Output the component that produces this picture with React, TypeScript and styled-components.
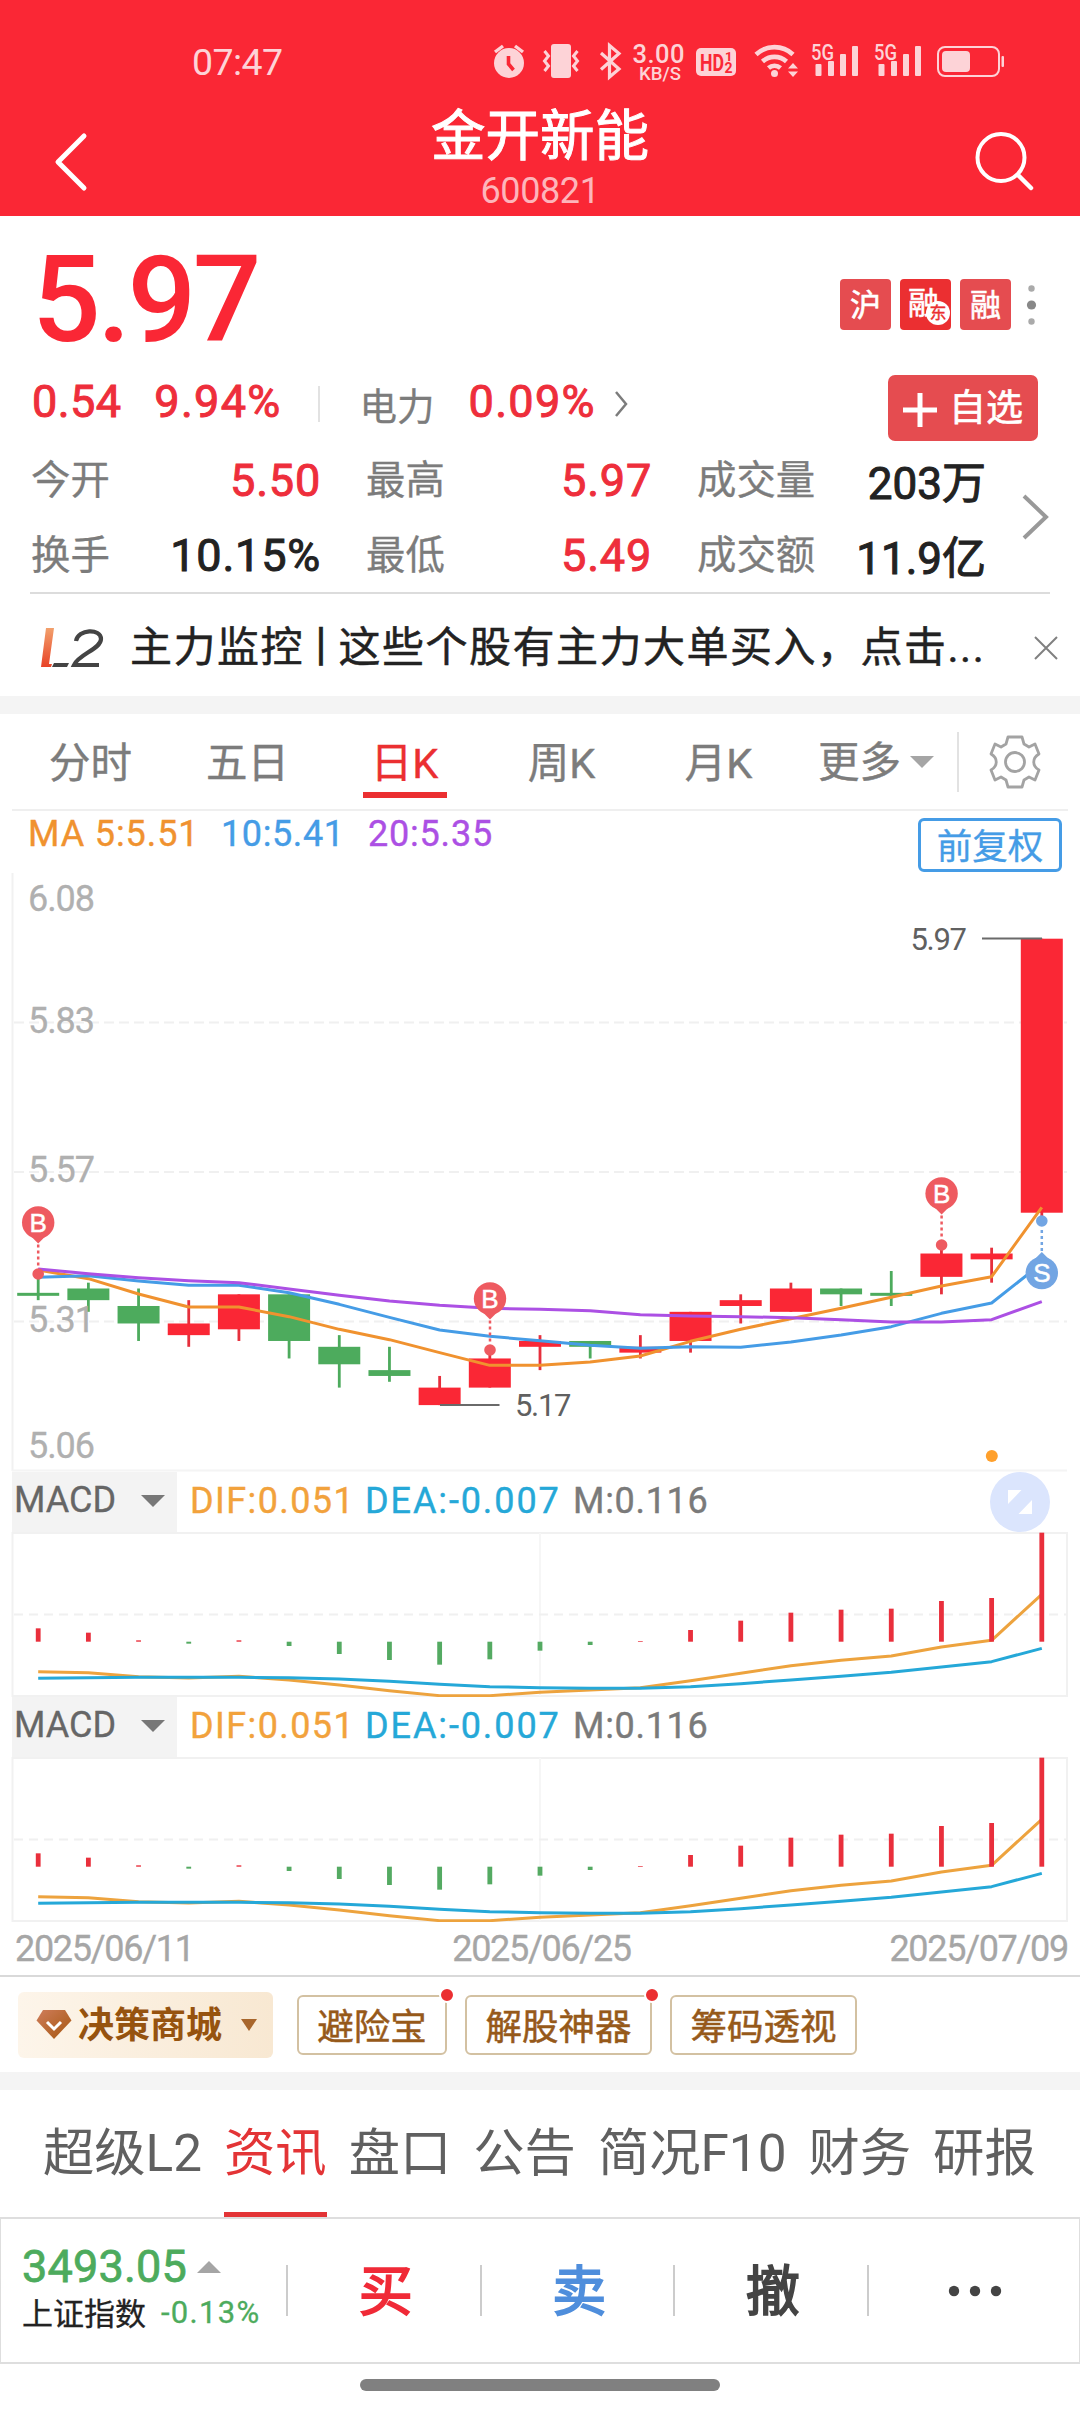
import React from 'react';
import styled, { createGlobalStyle } from 'styled-components';

const GlobalStyle = createGlobalStyle`
  * { box-sizing: border-box; }
  body { margin: 0; background: #fff; }
`;

const FONT = `Roboto, 'Noto Sans CJK SC', sans-serif`;
const RED = '#fa2735';
const VALUE_RED = '#ee2e3b';
const GREEN = '#4dab5d';
const ORANGE = '#f0922f';
const BLUE = '#459ce6';
const PURPLE = '#ac50e4';

const Screen = styled.div`
  width: 1080px;
  height: 2412px;
  display: flex;
  flex-direction: column;
  overflow: hidden;
  background: #fff;
  font-family: ${FONT};
  color: #222;
`;

const Text = styled.span<{ $size: number; $color?: string; $ls?: number; $weight?: number; $bold?: number }>`
  display: block;
  white-space: nowrap;
  line-height: 1.2;
  font-size: ${p => p.$size}px;
  color: ${p => p.$color ?? 'inherit'};
  letter-spacing: ${p => p.$ls ?? 0}px;
  font-weight: ${p => p.$weight ?? 400};
  -webkit-text-stroke: ${p => p.$bold ?? 0}px currentColor;
`;

/* ---------- header ---------- */

const Header = styled.header`
  height: 216px;
  flex: none;
  background: ${RED};
  color: #fff;
`;

const StatusBar = styled.div`
  height: 98px;
  padding: 26px 76px 0 192px;
  display: flex;
  justify-content: space-between;
  align-items: center;
  color: #fdd3d7;
`;

const TitleBar = styled.div`
  display: grid;
  grid-template-columns: 140px 1fr 140px;
  height: 118px;
`;

const TitleStack = styled.div`
  display: flex;
  flex-direction: column;
  align-items: center;
  gap: 1px;
  padding-top: 6px;
`;

const StatusIcons = () => (
  <svg width="512" height="54" viewBox="492 35 512 54" fill="#fdd3d7" fontFamily="Roboto, sans-serif">
    <circle cx="509" cy="63" r="15" />
    <path d="M495 52l8-6M523 52l-8-6" stroke="#fdd3d7" strokeWidth="3.4" />
    <path d="M508.500 56v8l5 6" stroke={RED} strokeWidth="3.600" fill="none" />
    <rect x="551" y="44" width="20" height="34" rx="3" />
    <path d="M544.500 51l4 5-4 5 4 5-4 5M577.500 51l-4 5 4 5-4 5 4 5" stroke="#fdd3d7" strokeWidth="3" fill="none" />
    <path d="M601 53l18 16-9.500 8V45.500l9.500 8-18 16" stroke="#fdd3d7" strokeWidth="3.200" fill="none" />
    <text x="632.500" y="62.500" fontSize="25.500" fontWeight="500" textLength="52">3.00</text>
    <text x="639" y="80" fontSize="19" fontWeight="500" textLength="42" lengthAdjust="spacingAndGlyphs">KB/S</text>
    <rect x="696" y="48" width="40" height="28" rx="5" />
    <text x="700" y="70.500" fontSize="23" fontWeight="700" fill={RED} textLength="24" lengthAdjust="spacingAndGlyphs">HD</text>
    <text x="725" y="61" fontSize="13" fontWeight="700" fill={RED}>1</text>
    <text x="724.500" y="72.500" fontSize="14" fontWeight="700" fill={RED}>2</text>
    <g fill="none" stroke="#fdd3d7" strokeWidth="4.600">
      <path d="M756 54.500a27 27 0 0 1 37 0" />
      <path d="M762.500 61.500a18 18 0 0 1 24 0" />
      <path d="M768.500 68a9 9 0 0 1 12 0" />
    </g>
    <circle cx="774.500" cy="73.500" r="3.500" />
    <path d="M788 68.500l5-5.500 5 5.500zM788 71.500l5 5.500 5-5.500z" />
    {[0, 63].map(dx => (
      <g key={dx} transform={`translate(${dx} 0)`}>
        <text x="811" y="60" fontSize="21.500" fontWeight="500" textLength="23" lengthAdjust="spacingAndGlyphs">5G</text>
        <rect x="815.500" y="64" width="6" height="12" rx="1" />
        <rect x="828" y="61" width="6" height="15" rx="1" />
        <rect x="840" y="54" width="6" height="22" rx="1" />
        <rect x="852" y="46" width="6" height="30" rx="1" />
      </g>
    ))}
    <rect x="938" y="47" width="61" height="29" rx="7" fill="none" stroke="#fdd3d7" strokeWidth="2" />
    <rect x="942" y="51" width="28" height="21" rx="4" />
    <rect x="1001.500" y="56" width="2.500" height="11" rx="1" />
  </svg>
);

/* ---------- quote ---------- */

const Quote = styled.section`
  height: 480px;
  flex: none;
`;

const PriceRow = styled.div`
  height: 150px;
  padding: 0 43px 0 32px;
  display: flex;
  justify-content: space-between;
  align-items: center;
`;

const Price = styled.div`
  font-size: 121px;
  line-height: 120px;
  font-weight: 500;
  letter-spacing: -3.5px;
  color: ${RED};
  padding-top: 18px;
`;

const Badges = styled.div`
  display: flex;
  align-items: center;
  gap: 9px;
  padding-top: 27px;
`;

const Badge = styled.div<{ $strong?: boolean }>`
  position: relative;
  width: 51px;
  height: 51px;
  border-radius: 4px;
  background: ${p => (p.$strong ? '#eb2f31' : '#e54c50')};
  color: #fff;
  font-size: 31px;
  line-height: ${p => (p.$strong ? 49 : 54)}px;
  text-align: center;
  padding-right: ${p => (p.$strong ? 4 : 0)}px;
  -webkit-text-stroke: 0.6px #fff;
`;

const BadgeMark = styled.span`
  position: absolute;
  right: 1px;
  bottom: 5px;
  width: 24px;
  height: 24px;
  border-radius: 50%;
  background: #fff;
  color: #eb2f31;
  font-size: 17px;
  line-height: 25px;
  -webkit-text-stroke: 0.4px #eb2f31;
`;

const DotMenu = styled.svg`
  margin-left: 6px;
`;

const ChangeRow = styled.div`
  height: 76px;
  padding: 0 42px 0 32px;
  display: flex;
  align-items: center;
`;

const Shift = styled.div<{ $ml?: number; $up?: number; $down?: number }>`
  margin-left: ${p => p.$ml ?? 0}px;
  margin-top: ${p => p.$down ?? 0}px;
  margin-bottom: ${p => p.$up ?? 0}px;
`;

const VLine = styled.div<{ $h: number; $w?: number; $color?: string }>`
  width: ${p => p.$w ?? 2}px;
  height: ${p => p.$h}px;
  flex: none;
  background: ${p => p.$color ?? '#e2e2e2'};
`;

const AddButton = styled.button`
  margin: 8px 0 0 auto;
  width: 150px;
  height: 66px;
  padding: 3px 15px 0;
  border: 0;
  border-radius: 7px;
  background: #e54c50;
  color: #fff;
  font-family: ${FONT};
  display: flex;
  align-items: center;
  justify-content: space-between;
`;

const Stats = styled.div`
  display: flex;
  align-items: center;
  height: 150px;
  padding-left: 31px;
`;

const StatGrid = styled.div`
  display: grid;
  grid-template-columns: 290px 286px 289px;
  grid-auto-rows: 75px;
  column-gap: 45px;
`;

const Stat = styled.div<{ $low?: boolean }>`
  display: flex;
  justify-content: space-between;
  align-items: center;
  padding-top: 3px;
  & > :last-child {
    padding-top: ${p => (p.$low ? 7 : 0)}px;
  }
`;

const NoticeRule = styled.hr`
  margin: 0 30px;
  border: 0;
  height: 2px;
  background: #dcdcdc;
`;

const NoticeRow = styled.div`
  height: 102px;
  padding: 6px 22px 0 40px;
  display: flex;
  align-items: center;
`;

const NoticeText = styled.div`
  margin-left: 26px;
  display: flex;
`;

const NoticeBar = styled.span`
  margin: 0 -5px 0 -4px;
`;

const CloseButton = styled.div`
  margin-left: auto;
  height: 24px;
`;

const Band = styled.div`
  height: 18px;
  flex: none;
  background: #f4f4f4;
`;

/* ---------- period tabs ---------- */

const PeriodTabs = styled.nav`
  height: 97px;
  flex: none;
  margin: 0 12px;
  border-bottom: 2px solid #efefef;
  display: flex;
  align-items: center;
`;

const PeriodTab = styled.div<{ $active?: boolean }>`
  width: 157px;
  height: 95px;
  padding-top: 25px;
  flex: none;
  display: flex;
  flex-direction: column;
  align-items: center;
  gap: 3px;
  color: ${p => (p.$active ? '#eb2f31' : '#7c7c7c')};
`;

const TabMark = styled.div`
  width: 84px;
  height: 6px;
  background: #eb2f31;
`;

const MoreTab = styled.div`
  width: 160px;
  padding-left: 21px;
  padding-top: 2px;
  flex: none;
  display: flex;
  align-items: center;
  gap: 9px;
  color: #7c7c7c;
`;

/* ---------- chart ---------- */

const MaRow = styled.div`
  height: 62px;
  flex: none;
  padding: 0 18px 0 28px;
  display: flex;
  align-items: flex-start;
`;

const MaItem = styled.div<{ $w: number; $color: string; $ls: number }>`
  width: ${p => p.$w}px;
  font-size: 36px;
  line-height: 47px;
  white-space: nowrap;
  letter-spacing: ${p => p.$ls}px;
  color: ${p => p.$color};
  -webkit-text-stroke: 0.4px currentColor;
`;

const AdjustButton = styled.div`
  margin: 7px 0 0 auto;
  width: 144px;
  height: 54px;
  border: 3px solid #459ce6;
  border-radius: 6px;
  color: #459ce6;
  font-size: 35.5px;
  line-height: 53px;
  text-align: center;
  -webkit-text-stroke: 0.3px currentColor;
`;

const ChartSvg = styled.svg`
  display: block;
  flex: none;
`;

const X0 = 38.2;
const STEP = 50.18;
const cx = (i: number) => X0 + i * STEP;
const py = (p: number) => 938.7 + (5.97 - p) * 583;

type Candle = [up: 0 | 1, top: number, bottom: number, high: number, low: number];
const CANDLES: Candle[] = [
  [0, 5.36, 5.36, 5.39, 5.35],
  [0, 5.37, 5.35, 5.38, 5.33],
  [0, 5.34, 5.31, 5.37, 5.28],
  [1, 5.31, 5.29, 5.35, 5.27],
  [1, 5.36, 5.3, 5.36, 5.28],
  [0, 5.36, 5.28, 5.36, 5.25],
  [0, 5.27, 5.24, 5.29, 5.2],
  [0, 5.23, 5.22, 5.27, 5.21],
  [1, 5.2, 5.17, 5.22, 5.17],
  [1, 5.25, 5.2, 5.26, 5.2],
  [1, 5.28, 5.27, 5.29, 5.23],
  [0, 5.28, 5.27, 5.28, 5.25],
  [1, 5.27, 5.26, 5.29, 5.25],
  [1, 5.33, 5.28, 5.33, 5.26],
  [1, 5.35, 5.34, 5.36, 5.31],
  [1, 5.37, 5.33, 5.38, 5.33],
  [0, 5.37, 5.36, 5.37, 5.34],
  [0, 5.36, 5.36, 5.4, 5.34],
  [1, 5.43, 5.39, 5.44, 5.36],
  [1, 5.43, 5.42, 5.44, 5.38],
  [1, 5.97, 5.5, 5.97, 5.49],
];

const MA5 = [510, 536, 582, 621, 621, 650, 688, 719, 758, 796, 796, 786, 768, 724, 688, 656, 625, 592, 558, 530, 322];
const MA10 = [532, 527, 543, 556, 556, 578, 613, 652, 690, 709, 722, 736, 745, 740, 742, 726, 705, 680, 640, 609, 490];
const MA20 = [507, 521, 533, 542, 548, 567, 586, 603, 616, 625, 628, 632, 644, 648, 650, 653, 659, 666, 666, 659, 605];

const line = (vals: number[], base: number) => vals.map((v, i) => `${cx(i)},${base + v / 3}`).join(' ');

const Marker = ({ x, y, dot, letter }: { x: number; y: number; dot: number; letter: 'B' | 'S' }) => {
  const buy = letter === 'B';
  const color = buy ? '#ee5a60' : '#72a5e3';
  const dir = buy ? 1 : -1;
  return (
    <g>
      <line x1={x} x2={x} y1={y + dir * 22} y2={dot - dir * 6} stroke={color} strokeWidth="2.500" strokeDasharray="3 3" />
      <circle cx={x} cy={y} r="16.200" fill={color} />
      <path d={`M${x - 8} ${y + dir * 13}L${x} ${y + dir * 21}L${x + 8} ${y + dir * 13}z`} fill={color} />
      <circle cx={x} cy={dot} r="5.800" fill={color} />
      <text x={x} y={y + 9} fill="#fff" fontFamily="'Liberation Sans', sans-serif" fontSize="26" textAnchor="middle" stroke="#fff" strokeWidth="0.500">
        {letter}
      </text>
    </g>
  );
};

const KChart = () => (
  <ChartSvg width="1080" height="599" viewBox="0 873 1080 599">
    <path d="M12.500 873V1471" stroke="#f1f1f1" strokeWidth="2" />
    <path d="M12 1470.500H1067" stroke="#f4f4f4" strokeWidth="2" />
    {[1022.500, 1172, 1321.500].map(y => (
      <path key={y} d={`M14 ${y}H1067`} stroke="#f0f0f0" strokeWidth="2" strokeDasharray="10 5" />
    ))}
    {CANDLES.map(([up, t, b, h, l], i) => {
      const c = up ? RED : GREEN;
      const hgt = Math.max(py(b) - py(t), 3);
      return (
        <g key={i} fill={c}>
          <rect x={cx(i) - 1.4} y={py(h)} width="2.800" height={py(l) - py(h)} fill={up ? '#e62f3c' : GREEN} />
          <rect x={cx(i) - 21} y={t === b ? py(t) - 1.5 : py(t)} width="42" height={hgt} />
        </g>
      );
    })}
    <g fill="none" strokeWidth="3" strokeLinejoin="round">
      <polyline points={line(MA5, 1100)} stroke={ORANGE} />
      <polyline points={line(MA10, 1100)} stroke={BLUE} />
      <polyline points={line(MA20, 1100)} stroke={PURPLE} />
    </g>
    <g fontFamily="Roboto, sans-serif" fontSize="36" fill="#b0b0b0" stroke="#b0b0b0" strokeWidth="0.300">
      <text x="28" y="911" textLength="67">6.08</text>
      <text x="28" y="1033" textLength="67">5.83</text>
      <text x="28" y="1182" textLength="67">5.57</text>
      <text x="28" y="1332" textLength="67">5.31</text>
      <text x="28" y="1458" textLength="67">5.06</text>
    </g>
    <g fontFamily="Roboto, sans-serif" fontSize="31" fill="#606060">
      <text x="910.500" y="950" textLength="56.500">5.97</text>
      <text x="515" y="1416" textLength="56.500">5.17</text>
    </g>
    <path d="M982 938.500H1042M440 1405H499.500" stroke="#6a6a6a" strokeWidth="2" />
    <Marker x={38.2} y={1222.5} dot={1274} letter="B" />
    <Marker x={490} y={1298.5} dot={1350} letter="B" />
    <Marker x={941.6} y={1193.5} dot={1245} letter="B" />
    <Marker x={1041.8} y={1273} dot={1221} letter="S" />
    <circle cx="991.800" cy="1456" r="6" fill="#ffa02c" />
  </ChartSvg>
);

const MacdHeader = styled.div`
  position: relative;
  height: 60px;
  flex: none;
  padding-left: 12px;
  display: flex;
  align-items: stretch;
`;

const MacdSelect = styled.div`
  width: 165px;
  padding: 0 12px 2px 2px;
  background: #f3f3f3;
  display: flex;
  align-items: center;
  justify-content: space-between;
`;

const MacdValue = styled.div<{ $ml: number; $w: number; $color: string; $ls: number }>`
  margin-left: ${p => p.$ml}px;
  width: ${p => p.$w}px;
  font-size: 36px;
  line-height: 58px;
  white-space: nowrap;
  letter-spacing: ${p => p.$ls}px;
  color: ${p => p.$color};
  -webkit-text-stroke: 0.4px currentColor;
`;

const ExpandButton = styled.div`
  position: absolute;
  right: 30px;
  top: 0;
  width: 60px;
  height: 60px;
`;

const BARS = [505, 518, 541, 551, 541, 558, 582, 600, 614, 598, 572, 555, 543, 510, 482, 458, 449, 446, 423, 414, 218];
const DIF = [635, 638, 650, 654, 649, 660, 675, 692, 707, 707, 697, 690, 683, 662, 640, 617, 601, 588, 561, 541, 403];
const DEA = [655, 653, 652, 652, 652, 653, 657, 664, 673, 680, 683, 685, 685, 680, 671, 660, 649, 637, 621, 605, 565];

const MacdBlock = ({ expand }: { expand?: boolean }) => (
  <>
    <MacdHeader>
      <MacdSelect>
        <Text $size={36} $color="#666" $ls={0} $bold={0.3}>MACD</Text>
        <svg width="24" height="12" viewBox="0 0 24 12"><path d="M0 0h24L12 12z" fill="#777" /></svg>
      </MacdSelect>
      <MacdValue $ml={13} $w={175} $color="#f2a23c" $ls={1.4}>DIF:0.051</MacdValue>
      <MacdValue $ml={0} $w={208} $color="#25a8d8" $ls={1.9}>DEA:-0.007</MacdValue>
      <MacdValue $ml={0} $w={150} $color="#7a7a7a" $ls={0.7}>M:0.116</MacdValue>
      {expand && (
        <ExpandButton>
          <svg width="60" height="60" viewBox="0 0 60 60">
            <circle cx="30" cy="30" r="30" fill="#dbe5fd" />
            <path d="M18 18h13.500L18 32zM42 42H28.500L42 28z" fill="#fff" />
          </svg>
        </ExpandButton>
      )}
    </MacdHeader>
    <ChartSvg width="1080" height="165" viewBox="0 1532 1080 165">
      <path d="M12.500 1533H1067V1696H12.500z" fill="none" stroke="#f1f1f1" strokeWidth="2" />
      <path d="M540 1533V1696" stroke="#f6f6f6" strokeWidth="2" />
      <path d="M14 1614.500H1067" stroke="#f0f0f0" strokeWidth="2" strokeDasharray="9 6" />
      <g fill="none" strokeWidth="3" strokeLinejoin="round">
        <polyline points={line(DIF, 1460)} stroke="#eda33e" />
        <polyline points={line(DEA, 1460)} stroke="#25a8d8" />
      </g>
      {BARS.map((v, i) => {
        const y = 1460 + v / 3;
        const base = 1641.7;
        return <rect key={i} x={cx(i) - 2.4} y={Math.min(y, base)} width="4.800" height={Math.abs(base - y)} fill={y < base ? '#e92f3c' : '#54aa62'} />;
      })}
    </ChartSvg>
  </>
);

const Dates = styled.div`
  height: 55px;
  flex: none;
  padding: 3px 12px 0 15px;
  border-bottom: 2px solid #d9d9d9;
  display: flex;
  justify-content: space-between;
  align-items: center;
`;

/* ---------- shop ---------- */

const ShopRow = styled.div`
  height: 95px;
  flex: none;
  padding-left: 18px;
  display: flex;
  align-items: center;
  color: #96591a;
`;

const ShopButton = styled.div`
  width: 255px;
  height: 66px;
  margin-right: 24px;
  padding: 0 16px 0 18px;
  border-radius: 6px;
  background: linear-gradient(90deg, #fdf5ea, #f8e8d2);
  display: flex;
  align-items: center;
  & > :last-child {
    margin-left: auto;
  }
`;

const ShopLabel = styled.span`
  margin-left: 6px;
  padding-top: 3px;
  font-size: 36px;
  line-height: 42px;
  font-weight: 700;
  color: #96530f;
`;

const ShopTag = styled.div<{ $w: number; $dot?: boolean }>`
  position: relative;
  width: ${p => p.$w}px;
  height: 60px;
  margin-right: 18px;
  border: 2px solid #d3c1a2;
  border-radius: 6px;
  font-size: 36.5px;
  line-height: 61px;
  text-align: center;
  white-space: nowrap;
  -webkit-text-stroke: 0.5px currentColor;
  &::after {
    content: '';
    display: ${p => (p.$dot ? 'block' : 'none')};
    position: absolute;
    right: -10px;
    top: -10px;
    width: 12px;
    height: 12px;
    border: 2px solid #fff;
    box-sizing: content-box;
    border-radius: 50%;
    background: #eb2f31;
  }
`;

/* ---------- bottom ---------- */

const InfoTabs = styled.nav`
  height: 127px;
  flex: none;
  padding-left: 43px;
  display: flex;
  gap: 22px;
`;

const InfoTab = styled.div<{ $active?: boolean }>`
  font-size: 51.300px;
  line-height: 120px;
  padding-top: 4px;
  height: 127px;
  white-space: nowrap;
  color: ${p => (p.$active ? '#e33436' : '#606060')};
  border-bottom: 5px solid ${p => (p.$active ? '#e33436' : 'transparent')};
`;

const TradeBar = styled.div`
  height: 147px;
  flex: none;
  border: 1px solid #dedede;
  border-width: 2px 1px;
  display: flex;
  align-items: center;
`;

const IndexBox = styled.div`
  width: 285px;
  padding-left: 21px;
  padding-bottom: 2px;
  display: flex;
  flex-direction: column;
`;

const IndexLine = styled.div<{ $h: number; $gap: number }>`
  height: ${p => p.$h}px;
  display: flex;
  align-items: center;
  gap: ${p => p.$gap}px;
`;

const IndexChange = styled.span`
  font-size: 31px;
  line-height: 37px;
  padding-bottom: 4px;
  letter-spacing: 1.3px;
  color: ${GREEN};
  -webkit-text-stroke: 0.3px currentColor;
`;

const Action = styled.div<{ $color: string }>`
  width: 191.500px;
  display: flex;
  justify-content: center;
  align-items: center;
  font-size: 54px;
  line-height: 60px;
  padding: 4px 0 0 4px;
  color: ${p => p.$color};
  -webkit-text-stroke: 1.800px currentColor;
`;

const MoreAction = styled.div`
  flex: 1;
  display: flex;
  padding-left: 79px;
`;

const HomeArea = styled.div`
  height: 48px;
  display: flex;
  justify-content: center;
  padding-top: 15px;
`;

const HomeBar = styled.div`
  width: 360px;
  height: 12px;
  border-radius: 6px;
  background: #808080;
`;

const STATS: [string, string, string][] = [
  ['今开', '5.50', VALUE_RED],
  ['最高', '5.97', VALUE_RED],
  ['成交量', '203万', '#222'],
  ['换手', '10.15%', '#222'],
  ['最低', '5.49', VALUE_RED],
  ['成交额', '11.9亿', '#222'],
];

const isMixed = (value: string) => /[万亿]/.test(value);

export default function App() {
  return (
    <Screen>
      <GlobalStyle />
      <Header>
        <StatusBar>
          <Text $size={37.5} $ls={-0.6}>07:47</Text>
          <StatusIcons />
        </StatusBar>
        <TitleBar>
          <svg width="140" height="118" viewBox="0 98 140 118">
            <path d="M84 136L58 162L84 188" fill="none" stroke="#fff" strokeWidth="5" strokeLinecap="round" strokeLinejoin="round" />
          </svg>
          <TitleStack>
            <Text $size={54.5} $bold={1}>金开新能</Text>
            <Text $size={36} $color="#fdb5bb" $ls={-0.4}>600821</Text>
          </TitleStack>
          <svg width="140" height="118" viewBox="940 98 140 118">
            <circle cx="1001" cy="157.500" r="23.500" fill="none" stroke="#fff" strokeWidth="4" />
            <path d="M1018 175l13 13" stroke="#fff" strokeWidth="4.500" strokeLinecap="round" />
          </svg>
        </TitleBar>
      </Header>

      <Quote>
        <PriceRow>
          <Price>5.97</Price>
          <Badges>
            <Badge>沪</Badge>
            <Badge $strong>融<BadgeMark>东</BadgeMark></Badge>
            <Badge>融</Badge>
            <DotMenu width="11" height="44" viewBox="0 0 11 44">
              <circle cx="5.500" cy="5.500" r="3.200" fill="#aaa" />
              <circle cx="5.500" cy="22" r="4.600" fill="#888" />
              <circle cx="5.500" cy="38.500" r="3.200" fill="#aaa" />
            </DotMenu>
          </Badges>
        </PriceRow>
        <ChangeRow>
          <Shift $up={5}><Text $size={45} $ls={0.4} $bold={1} $color={VALUE_RED}>0.54</Text></Shift>
          <Shift $up={5} $ml={33}><Text $size={45} $ls={1.3} $bold={1} $color={VALUE_RED}>9.94%</Text></Shift>
          <Shift $ml={36}><VLine $h={36} /></Shift>
          <Shift $ml={40} $down={7}><Text $size={37.5} $color="#7c7c7c" $bold={0.3}>电力</Text></Shift>
          <Shift $up={5} $ml={34}><Text $size={45} $ls={1.3} $bold={1} $color={VALUE_RED}>0.09%</Text></Shift>
          <Shift $ml={18}>
            <svg width="14" height="26" viewBox="0 0 14 26" style={{ display: 'block' }}>
              <path d="M2 1l10 12L2 25" fill="none" stroke="#7c7c7c" strokeWidth="2.500" />
            </svg>
          </Shift>
          <AddButton>
            <svg width="34" height="34" viewBox="0 0 34 34"><path d="M0 17h34M17 0v34" stroke="#fff" strokeWidth="5" /></svg>
            <Text $size={37} $bold={0.6}>自选</Text>
          </AddButton>
        </ChangeRow>
        <Stats>
          <StatGrid>
            {STATS.map(([label, value, color]) => (
              <Stat key={label} $low={isMixed(value)}>
                <Text $size={39.4} $color="#7c7c7c" $bold={0.3}>{label}</Text>
                <Text $size={isMixed(value) ? 44 : 45} $ls={isMixed(value) ? 0 : 0.8} $bold={1} $color={color}>{value}</Text>
              </Stat>
            ))}
          </StatGrid>
          <Shift $ml={36}>
            <svg width="28" height="46" viewBox="0 0 28 46" style={{ display: 'block' }}>
              <path d="M2 2l22 21L2 44" fill="none" stroke="#999" strokeWidth="4" />
            </svg>
          </Shift>
        </Stats>
        <NoticeRule />
        <NoticeRow>
          <svg width="64" height="40" viewBox="40 627 64 40">
            <defs>
              <linearGradient id="l2" x1="0" y1="0" x2="0" y2="1">
                <stop offset="0" stopColor="#f2a06c" />
                <stop offset="1" stopColor="#e84327" />
              </linearGradient>
            </defs>
            <path d="M46 627h8l-5 36h3l-1 3H41z" fill="url(#l2)" />
            <path d="M54 662h15l-2 4H52z" fill="#444" />
            <path d="M76 640c2-12 25-13 25-2c0 10-22 15-27 26h25" fill="none" stroke="#444" strokeWidth="4.200" />
          </svg>
          <NoticeText>
            <Text $size={42} $ls={1.5} $bold={0.5}>
              主力监控<NoticeBar>丨</NoticeBar>这些个股有主力大单买入，点击...
            </Text>
          </NoticeText>
          <CloseButton>
            <svg width="24" height="24" viewBox="0 0 24 24" style={{ display: 'block' }}>
              <path d="M1 1l22 22M23 1L1 23" stroke="#808080" strokeWidth="2" />
            </svg>
          </CloseButton>
        </NoticeRow>
      </Quote>

      <Band />

      <PeriodTabs>
        {['分时', '五日', '日K', '周K', '月K'].map(t => (
          <PeriodTab key={t} $active={t === '日K'}>
            <Text $size={41.5} $bold={0.4}>{t}</Text>
            {t === '日K' && <TabMark />}
          </PeriodTab>
        ))}
        <MoreTab>
          <Text $size={41.5} $bold={0.4}>更多</Text>
          <svg width="24" height="12" viewBox="0 0 24 12"><path d="M0 0h24L12 12z" fill="#a5a5a5" /></svg>
        </MoreTab>
        <VLine $h={60} />
        <Shift $ml={29}>
          <svg width="54" height="56" viewBox="-27 -28 54 56" style={{ display: 'block' }} fill="none" stroke="#a3a3a3" strokeWidth="2.800" strokeLinejoin="round">
            <path d="M-7 -25H7L9 -18L14 -15L20 -18L24 -8C17 -4 17 4 24 8L20 18L14 15L9 18L7 25H-7L-9 18L-14 15L-20 18L-24 8C-17 4 -17 -4 -24 -8L-20 -18L-14 -15L-9 -18Z" />
            <circle r="9.500" />
          </svg>
        </Shift>
      </PeriodTabs>

      <MaRow>
        <MaItem $w={193} $color={ORANGE} $ls={0.9}>MA 5:5.51</MaItem>
        <MaItem $w={147} $color={BLUE} $ls={0.6}>10:5.41</MaItem>
        <MaItem $w={150} $color={PURPLE} $ls={0.8}>20:5.35</MaItem>
        <AdjustButton>前复权</AdjustButton>
      </MaRow>
      <KChart />
      <MacdBlock expand />
      <MacdBlock />
      <Dates>
        {['2025/06/11', '2025/06/25', '2025/07/09'].map(d => (
          <Text key={d} $size={36} $color="#a6a6a6" $ls={-1.3} $bold={0.3}>{d}</Text>
        ))}
      </Dates>

      <ShopRow>
        <ShopButton>
          <svg width="36" height="30" viewBox="0 0 36 30">
            <defs>
              <linearGradient id="gem" x1="0" y1="0" x2="1" y2="1">
                <stop offset="0" stopColor="#cf7d5b" />
                <stop offset="1" stopColor="#a5560f" />
              </linearGradient>
            </defs>
            <path d="M7 0h22l6.500 10.500L18 29L0.500 10.500z" fill="url(#gem)" />
            <path d="M11 12l7 7 7-7" fill="none" stroke="#fff" strokeWidth="3" />
          </svg>
          <ShopLabel>决策商城</ShopLabel>
          <svg width="16" height="12" viewBox="0 0 16 12"><path d="M0 0h16L8 12z" fill="#a8662c" /></svg>
        </ShopButton>
        <ShopTag $w={150} $dot>避险宝</ShopTag>
        <ShopTag $w={187} $dot>解股神器</ShopTag>
        <ShopTag $w={187}>筹码透视</ShopTag>
      </ShopRow>

      <Band />

      <InfoTabs>
        {['超级L2', '资讯', '盘口', '公告', '简况F10', '财务', '研报'].map(t => (
          <InfoTab key={t} $active={t === '资讯'}>{t}</InfoTab>
        ))}
      </InfoTabs>

      <TradeBar>
        <IndexBox>
          <IndexLine $h={50} $gap={10}>
            <Text $size={45} $ls={0.2} $bold={0.8} $color={GREEN}>3493.05</Text>
            <svg width="24" height="12" viewBox="0 0 24 12"><path d="M0 12h24L12 0z" fill="#a5a5a5" /></svg>
          </IndexLine>
          <IndexLine $h={46} $gap={15}>
            <Text $size={31} $bold={0.3}>上证指数</Text>
            <IndexChange>-0.13%</IndexChange>
          </IndexLine>
        </IndexBox>
        <VLine $h={51} $color="#ccc" />
        <Action $color="#f02a37">买</Action>
        <VLine $h={51} $color="#ccc" />
        <Action $color="#4f8edc">卖</Action>
        <VLine $h={51} $color="#ccc" />
        <Action $color="#444">撤</Action>
        <VLine $h={51} $color="#ccc" />
        <MoreAction>
          <svg width="54" height="12" viewBox="0 0 54 12">
            <circle cx="6" cy="6" r="5.200" fill="#444" />
            <circle cx="27" cy="6" r="5.200" fill="#444" />
            <circle cx="48" cy="6" r="5.200" fill="#444" />
          </svg>
        </MoreAction>
      </TradeBar>
      <HomeArea><HomeBar /></HomeArea>
    </Screen>
  );
}
